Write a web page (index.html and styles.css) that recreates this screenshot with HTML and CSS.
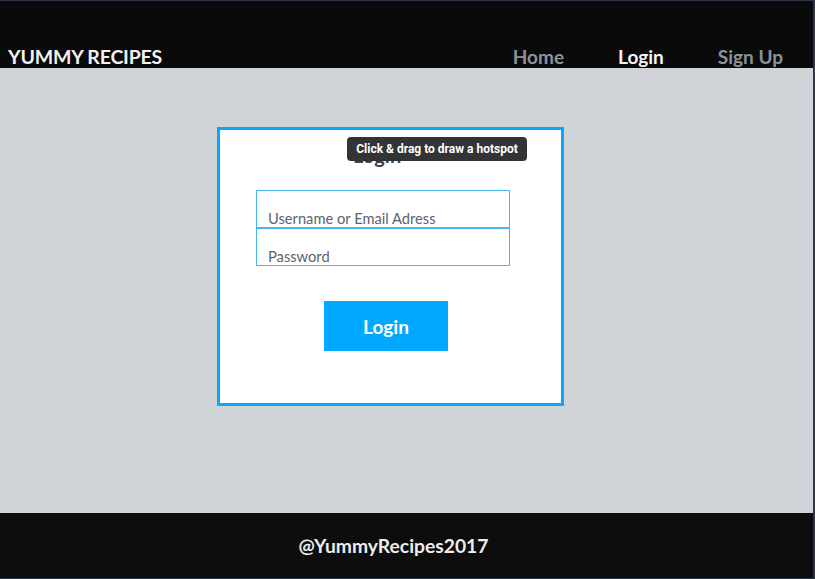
FILE: index.html
```html
<!DOCTYPE html>
<html lang="en">
<head>
<meta charset="utf-8">
<title>Yummy Recipes - Login</title>
<link rel="stylesheet" href="styles.css">
</head>
<body>
<div class="frame">
  <header class="header">
    <div class="brand">YUMMY RECIPES</div>
    <nav class="nav">
      <a class="nav-link" href="#">Home</a>
      <a class="nav-link active" href="#">Login</a>
      <a class="nav-link" href="#">Sign Up</a>
    </nav>
  </header>
  <main class="main">
    <div class="card">
      <h1 class="card-title">Login</h1>
      <div class="fields">
        <input class="field" type="text" placeholder="Username or Email Adress">
        <input class="field" type="password" placeholder="Password">
      </div>
      <button class="btn">Login</button>
      <div class="tooltip">Click &amp; drag to draw a hotspot</div>
    </div>
  </main>
  <footer class="footer">@YummyRecipes2017</footer>
</div>
</body>
</html>
```
FILE: styles.css
```css
* { box-sizing: border-box; }
html, body { margin: 0; padding: 0; }
body {
  width: 815px;
  height: 579px;
  background: #2c3646;
  font-family: Lato, "Open Sans", sans-serif;
  overflow: hidden;
}
.frame {
  margin-top: 1px;
  width: 813px;
  height: 577px;
  display: flex;
  flex-direction: column;
}
.header {
  height: 67px;
  background: #0a0a0a;
  display: flex;
  align-items: flex-end;
  justify-content: space-between;
  padding: 0 0 0 8px;
}
.brand {
  color: #f2f2f2;
  font-weight: 700;
  font-size: 19.5px;
  line-height: 24px;
  margin-bottom: -1px;
  letter-spacing: -0.2px;
}
.nav {
  display: flex;
  margin-bottom: -1px;
  margin-right: 30px;
}
.nav-link {
  color: #8c929b;
  font-weight: 700;
  font-size: 19px;
  line-height: 24px;
  text-decoration: none;
  margin-left: 54px;
}
.nav-link:first-child { margin-left: 0; }
.nav-link.active { color: #f5f5f5; }
.main {
  height: 445px;
  background: #d0d3d8;
  padding: 59px 0 0 217px;
}
.card {
  position: relative;
  width: 347px;
  height: 279px;
  background: #ffffff;
  border: 3px solid #0aa6f7;
  padding: 13px 0 0 36px;
}
.card-title {
  margin: 0 0 23px 97px;
  font-size: 20px;
  line-height: 24px;
  font-weight: 700;
  color: #3b4452;
}
.fields {
  display: flex;
  flex-direction: column;
  width: 254px;
}
.field {
  height: 38px;
  width: 254px;
  border: 1px solid #45b8f3;
  padding: 18px 11px 0;
  font-family: Lato, sans-serif;
  font-size: 14.7px;
  color: #555d69;
  outline: none;
  margin: 0;
}
.field::placeholder { color: #5b6370; opacity: 1; }
.btn {
  margin: 35px 0 0 68px;
  width: 124px;
  height: 50px;
  border: none;
  background: #00a8ff;
  color: #ffffff;
  font-family: Lato, sans-serif;
  font-weight: 700;
  font-size: 19px;
  padding: 0;
}
.tooltip {
  position: absolute;
  left: 127px;
  top: 7px;
  width: 180px;
  height: 24px;
  background: #333436;
  border-radius: 4px;
  color: #ffffff;
  font-family: Roboto, Inter, sans-serif;
  font-weight: 700;
  font-size: 12px;
  line-height: 24px;
  text-align: center;
}
.footer {
  height: 65px;
  background: #0d0d0d;
  color: #ececec;
  font-weight: 700;
  font-size: 19.3px;
  display: flex;
  align-items: center;
  justify-content: center;
  padding-right: 26px;
}
```
